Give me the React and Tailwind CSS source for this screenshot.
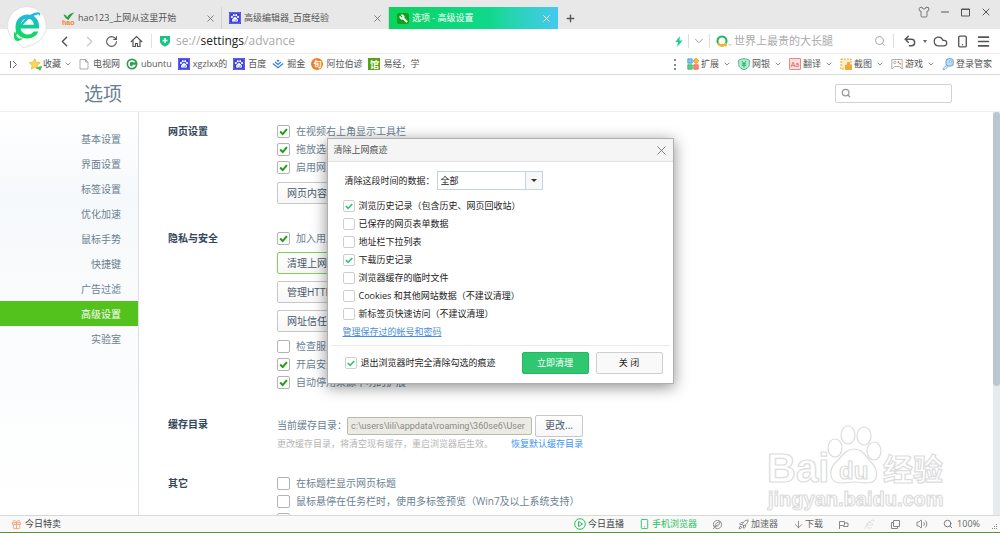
import React from 'react';
import { useState } from 'react';
import {
  ArrowDown, ChevronDown, ChevronLeft, ChevronRight, Cloud, Gift, Menu, Minus,
  Plus, Rocket, RotateCw, Search, Shirt, Smartphone, Undo2, Volume2, Wrench, X,
} from 'lucide-react';

const Paw = ({ className }) => (
  <svg viewBox="0 0 13 13" className={className}>
    <rect width="13" height="13" fill="#2b33dc" />
    <rect x="1" y="1" width="11" height="11" fill="none" stroke="#c9ccff" strokeWidth="0.5" />
    <g fill="#fff">
      <ellipse cx="3.2" cy="5.4" rx="1" ry="1.3" />
      <ellipse cx="5.2" cy="3.4" rx="1" ry="1.3" />
      <ellipse cx="7.8" cy="3.4" rx="1" ry="1.3" />
      <ellipse cx="9.8" cy="5.4" rx="1" ry="1.3" />
      <path d="M6.5 5.3c1.3 0 1.8 1.3 2.7 2.2 1 1 .9 3-.7 3.1-.8 0-1.3-.2-2-.2s-1.2.2-2 .2c-1.6-.1-1.7-2.1-.7-3.1.9-.9 1.4-2.2 2.7-2.2z" />
    </g>
    <path d="M5.300 8v1.300M7.300 8v1.300h.9V8" fill="none" stroke="#2b33dc" strokeWidth="0.5" />
  </svg>
);

const Logo = () => (
  <svg viewBox="0 0 42 44" className="absolute left-[6px] top-[5px] z-10 h-[44px] w-[42px]">
    <defs>
      <linearGradient id="logo" x1="0" y1="0" x2="0" y2="1">
        <stop offset="0" stopColor="#27b5ee" />
        <stop offset="0.45" stopColor="#12c9a0" />
        <stop offset="0.8" stopColor="#12d965" />
      </linearGradient>
    </defs>
    <path d="M21 1.5a19.5 19.5 0 0 1 7 37.600L17 43l-3.5-4A19.5 19.5 0 0 1 21 1.5z" fill="#fff" stroke="#dcdcdc" strokeWidth="0.8" />
    <path
      d="M9.500 22.500C9.500 14.500 15 9.500 21.500 9.500c6.500 0 11.500 4.500 11.500 11.500v2.500H14.500c.8 3.800 3.800 6 7.300 6 2.700 0 4.700-1.100 5.700-3h4.700c-1.300 4.300-5.400 6.900-10.700 6.900-7 0-12-4.200-12-10.900zm5.200-2.700h13.200c-.6-4-3-6.200-6.500-6.200-3.400 0-6 2.200-6.700 6.200z"
      fill="url(#logo)"
    />
    <path d="M9.200 35C6 30 15 15.500 25 9.500c4-2.400 8-3 9-1.500.5.8.3 2-.3 3.300.1-2-1.500-2.300-4.700-1C20.500 13.500 10 27 9.200 35z" fill="url(#logo)" />
    <path d="M8.500 26c-1 4-.5 8.500 1.700 9.800 2.300.6 5.300-1 7.300-2.600-3 .8-5.500.2-7-2.200-.9-1.400-1.600-3-2-5z" fill="#12d965" />
  </svg>
);

const HaoIcon = () => (
  <svg viewBox="0 0 13 13" className="h-[13px] w-[13px] shrink-0">
    <path d="M1.500 2.500c2 0 3 1.200 3.700 2.700C6.500 2.500 9 .8 12.500.5 10 2.500 8.500 5 6.500 8 4.500 7.500 2.500 5.500 1.500 2.500z" fill="#2fa043" />
    <text x="0" y="12.500" fontSize="7" fontWeight="700" fontFamily="Liberation Sans" fill="#f08030">hao</text>
  </svg>
);

const ShieldIcon = () => (
  <svg viewBox="0 0 12 12" className="h-[12px] w-[12px] shrink-0">
    <path d="M1 1h10v5.500C11 9 8.500 10.600 6 11.600 3.500 10.600 1 9 1 6.500z" fill="#16c586" />
    <path d="M6 3v5M3.500 5.500h5" stroke="#fff" strokeWidth="1.500" />
  </svg>
);

const HomeIcon = () => (
  <svg viewBox="0 0 13 13" className="ml-[12px] h-[13px] w-[13px] shrink-0" fill="none" stroke="#555" strokeWidth="1.200">
    <path d="M.8 7L6.500 1.500 12.200 7M3 5.500v6h2.500v-3h2v3H10v-6" />
  </svg>
);

const StarIcon = () => (
  <svg viewBox="0 0 13 13" className="h-[13px] w-[13px] shrink-0">
    <path d="M5.800.8l1.600 3.400 3.800.5-2.800 2.600.7 3.700-3.300-1.800L2.500 11l.6-3.700L.4 4.700l3.800-.5z" fill="#ffd84f" stroke="#f0a830" strokeWidth="0.7" />
    <path d="M7.500 10l5-1.500-1.500 3.700-1.200-1.200z" fill="#47bd58" stroke="#47bd58" />
  </svg>
);

const DocIcon = () => (
  <svg viewBox="0 0 12 12" className="h-[12px] w-[12px] shrink-0" fill="none" stroke="#999" strokeWidth="0.8">
    <path d="M2 1.500h5.500l2.500 2.500v7H2zM7.500 1.500V4H10" />
  </svg>
);

const CIcon = () => (
  <svg viewBox="0 0 12 12" className="h-[12px] w-[12px] shrink-0">
    <circle cx="6" cy="6" r="5.500" fill="#2f9e52" />
    <path d="M8.500 4.500A3 3 0 1 0 8.500 7.500H6.500" fill="none" stroke="#fff" strokeWidth="1.600" />
  </svg>
);

const JuejinIcon = () => (
  <svg viewBox="0 0 12 12" className="h-[12px] w-[12px] shrink-0" fill="none" stroke="#2f80e8" strokeWidth="1.200">
    <path d="M6 1.500L7.500 2.800 6 4 4.500 2.800z" fill="#2f80e8" stroke="none" />
    <path d="M3 4l3 2.400L9 4M.8 5.500L6 9.800l5.200-4.300" />
  </svg>
);

const OrangeIcon = () => (
  <span className="flex h-[12px] w-[12px] items-center justify-center rounded-full bg-[#ee8222] text-[8px] leading-none font-bold text-white">旬</span>
);

const GuanIcon = () => (
  <span className="flex h-[12px] w-[12px] items-center justify-center bg-[#59a20d] text-[9px] leading-none font-bold text-white">馆</span>
);

const ExtIcon = () => (
  <svg viewBox="0 0 12 12" className="h-[12px] w-[12px] shrink-0" strokeWidth="0.8">
    <path d="M.8.8h4.400v4.400H.8z" fill="#7cc8f5" stroke="#3ba0e0" />
    <path d="M9 0l2.800 2.900L9 5.800 6.200 2.900z" fill="#ffb53c" stroke="#ef8b1e" />
    <path d="M.8 6.800h4.400v4.400H.8z" fill="#5ed281" stroke="#28b055" />
    <path d="M6.800 6.800h4.400v4.400H6.800z" fill="#f78b80" stroke="#ea5648" />
  </svg>
);

const BankIcon = () => (
  <svg viewBox="0 0 12 12" className="h-[12px] w-[12px] shrink-0">
    <path d="M6 .5L11.300 2v4.500C11.300 9 8.500 11 6 11.600 3.500 11 .7 9 .7 6.500V2z" fill="#b6ecd0" stroke="#3bb879" strokeWidth="0.9" />
    <path d="M4 3l2 2.500L8 3M3.800 5.800h4.400M3.800 7.300h4.400M6 5.500V9.500" fill="none" stroke="#2aa367" strokeWidth="0.9" />
  </svg>
);

const TranslateIcon = () => (
  <span className="flex h-[12px] w-[12px] shrink-0 items-center justify-center rounded-[1px] border border-[#e58a88] bg-[#fbdedd] text-[7px] leading-none text-[#d9534f]">Aa</span>
);

const CutIcon = () => (
  <svg viewBox="0 0 12 12" className="h-[12px] w-[12px] shrink-0">
    <path d="M1 1h10v10H1z" fill="#ffefc2" stroke="#f0a52c" strokeDasharray="2 1" />
    <path d="M5 7h7v5H5zM6.500 7l1-3h2l1 3z" fill="#f2a93b" />
  </svg>
);

const GameIcon = () => (
  <svg viewBox="0 0 12 12" className="h-[12px] w-[12px] shrink-0" fill="none" stroke="#9a9a9a" strokeWidth="0.8">
    <path d="M.8 1.500h10.400v9.500l-2.700-2.500h-5L.8 11z" />
    <circle cx="3.800" cy="4.500" r="1.200" />
    <path d="M6.800 3.500l1.200 1.200M8.500 5.200l1.200 1.200" stroke="#e05050" strokeWidth="1.300" />
  </svg>
);

const KeyIcon = () => (
  <svg viewBox="0 0 12 12" className="h-[12px] w-[12px] shrink-0">
    <path d="M1 10.500L5 6.500l1.500 1.500-3.500 3.500H1z" fill="#d5eafb" stroke="#6aa3d8" strokeWidth="0.8" />
    <rect x="4" y="0.7" width="7.300" height="7.300" rx="2.500" fill="#b5dcf8" stroke="#5b9bd5" strokeWidth="0.9" />
    <circle cx="8.500" cy="3.500" r="1" fill="#fff" stroke="#5b9bd5" strokeWidth="0.5" />
  </svg>
);

const leftMarks = [
  { label: '电视网', icon: <DocIcon /> },
  { label: 'ubuntu', icon: <CIcon /> },
  { label: 'xgzlxx的', icon: <Paw className="h-[12px] w-[12px]" /> },
  { label: '百度', icon: <Paw className="h-[12px] w-[12px]" /> },
  { label: '掘金', icon: <JuejinIcon /> },
  { label: '阿拉伯谚', icon: <OrangeIcon /> },
  { label: '易经，学', icon: <GuanIcon /> },
];

const rightMarks = [
  { label: '扩展', icon: <ExtIcon /> },
  { label: '网银', icon: <BankIcon /> },
  { label: '翻译', icon: <TranslateIcon /> },
  { label: '截图', icon: <CutIcon /> },
  { label: '游戏', icon: <GameIcon /> },
];

const menu = ['基本设置', '界面设置', '标签设置', '优化加速', '鼠标手势', '快捷键', '广告过滤', '高级设置', '实验室'];

const clearItems = [
  ['浏览历史记录（包含历史、网页回收站）', true],
  ['已保存的网页表单数据', false],
  ['地址栏下拉列表', false],
  ['下载历史记录', true],
  ['浏览器缓存的临时文件', false],
  ['Cookies 和其他网站数据（不建议清理）', false],
  ['新标签页快速访问（不建议清理）', false],
];

const Option = ({ label, checked = false }) => (
  <label className="flex h-[18px] items-center gap-[6px] whitespace-nowrap text-[#6b7f93]">
    <span className="relative flex h-[13px] w-[13px]">
      <input type="checkbox" defaultChecked={checked} className="peer h-[13px] w-[13px] appearance-none rounded-[2px] border border-[#b4b4b4] bg-white" />
      <svg viewBox="0 0 13 13" className="pointer-events-none absolute inset-0 hidden peer-checked:block">
        <path d="M3.200 6.500l2.500 2.600 4.200-5" fill="none" stroke="#1f9d12" strokeWidth="2" />
      </svg>
    </span>
    {label}
  </label>
);

const ClearOption = ({ label, checked }) => (
  <label className="flex h-[18px] items-center gap-1 whitespace-nowrap">
    <span className="relative flex h-[12px] w-[12px]">
      <input type="checkbox" defaultChecked={checked} className="peer h-[12px] w-[12px] appearance-none rounded-[2px] border border-[#cfcfcf] bg-white" />
      <svg viewBox="0 0 12 12" className="pointer-events-none absolute inset-0 hidden peer-checked:block">
        <path d="M2.800 6l2.300 2.300L9.300 4" fill="none" stroke="#2fc56f" strokeWidth="1.600" />
      </svg>
    </span>
    {label}
  </label>
);

const PageButton = ({ children, active }) => (
  <button
    type="button"
    className={`block h-[22px] rounded-[2px] border bg-linear-to-b from-white to-[#f7f7f7] px-[9px] whitespace-nowrap text-[#46566a] ${active ? 'border-[#7fd455]' : 'border-[#c8c8c8]'}`}
  >
    {children}
  </button>
);

const Section = ({ title, className = '', children }) => (
  <section className={`flex ${className}`}>
    <h2 className="w-[109px] shrink-0 leading-[18px] font-bold text-[#33475b]">{title}</h2>
    <div className="min-w-0">{children}</div>
  </section>
);

const Tab = ({ icon, children }) => (
  <div className="flex h-[22px] w-[167px] items-center border-r border-[#d2d2d2] pr-[5px] pl-[7px]">
    {icon}
    <span className="ml-[3px] flex-1 truncate">{children}</span>
    <button type="button" aria-label="关闭标签"><X className="h-[11px] w-[11px] text-[#777]" strokeWidth={2} /></button>
  </div>
);

const TabBar = () => (
  <header className="flex h-[29px] shrink-0 items-end justify-between bg-[#e8e8e8] text-[9px] text-[#555]">
    <div className="flex h-[22px] items-center pl-[55px]">
      <Tab icon={<HaoIcon />}>hao123_上网从这里开始</Tab>
      <Tab icon={<Paw className="h-[12px] w-[12px]" />}>高级编辑器_百度经验</Tab>
      <div className="flex h-[22px] w-[169px] items-center bg-linear-to-r from-[#0bd35e] via-[#10d98c] via-60% to-[#45c8f0] pr-[6px] pl-[8px] text-white">
        <span className="flex h-[11px] w-[12px] items-center justify-center rounded-[2px] bg-[#15a01a]">
          <Wrench className="h-[9px] w-[9px] -scale-x-100" fill="white" />
        </span>
        <span className="ml-[3px] flex-1">选项 - 高级设置</span>
        <button type="button" aria-label="关闭标签"><X className="h-[11px] w-[11px]" /></button>
      </div>
      <button type="button" aria-label="新标签" className="ml-[7px]"><Plus className="h-[11px] w-[11px]" strokeWidth={3} /></button>
    </div>
    <div className="flex items-center gap-[9px] self-start pt-[6px] pr-[8px] text-[#555]">
      <Shirt className="h-[12px] w-[12px]" strokeWidth={1.5} />
      <Minus className="h-[12px] w-[12px]" />
      <svg viewBox="0 0 11 11" className="h-[11px] w-[11px]" fill="none" stroke="#555"><path d="M1.500 2h8v7h-8zM1.500 2.500h8" /></svg>
      <X className="h-[12px] w-[12px]" />
    </div>
  </header>
);

const AddressBar = () => (
  <div className="flex h-[25px] shrink-0 items-center border-b border-[#ececec] bg-white pr-[9px] pl-[56px] text-[#555]">
    <ChevronLeft className="h-[17px] w-[17px]" />
    <ChevronRight className="ml-[8px] h-[17px] w-[17px] text-[#ccc]" />
    <RotateCw className="ml-[7px] h-[13px] w-[13px]" />
    <HomeIcon />
    <span className="mr-[7px] ml-[8px] h-[14px] w-px bg-[#e0e0e0]" />
    <ShieldIcon />
    <div className="ml-[5px] flex-1 text-[12px] text-[#aaa]">se://<span className="text-[#222]">settings</span>/advance</div>
    <svg viewBox="0 0 8 12" className="h-[11px] w-[8px]"><path d="M5 0L0 6.500h3L2 12l6-7H4.500z" fill="#1bcf91" /></svg>
    <span className="mr-[3px] ml-[5px] h-[14px] w-px bg-[#ddd]" />
    <ChevronDown className="h-[14px] w-[14px] text-[#999]" strokeWidth={1.5} />
    <span className="mx-[3px] h-[14px] w-px bg-[#ddd]" />
    <svg viewBox="0 0 16 12" className="ml-[3px] h-[12px] w-[16px]" fill="none">
      <circle cx="6" cy="6" r="4.500" stroke="#19b955" strokeWidth="2" />
      <path d="M2 8A4.500 4.500 0 0 0 10 8M8.500 9l2 2" stroke="#fbb320" strokeWidth="2" />
      <path d="M12.500 9l1.500 1.500L15.500 9" stroke="#aaa" strokeWidth="0.8" />
    </svg>
    <input aria-label="搜索" placeholder="世界上最贵的大长腿" className="ml-[2px] w-[140px] bg-transparent text-[11px] placeholder:text-[#aaa]" />
    <Search className="h-[12px] w-[12px] text-[#aaa]" />
    <span className="mr-[9px] ml-[7px] h-[14px] w-px bg-[#ddd]" />
    <Undo2 className="h-[14px] w-[14px]" strokeWidth={2.5} />
    <span className="mx-[6px] border-x-2 border-t-3 border-x-transparent border-t-[#666]" />
    <Cloud className="h-[15px] w-[15px]" />
    <Smartphone className="ml-[8px] h-[13px] w-[13px]" strokeWidth={2.5} />
    <Menu className="ml-[7px] h-[15px] w-[15px]" strokeWidth={2.5} />
  </div>
);

const BookmarkBar = () => (
  <nav className="flex h-[21px] shrink-0 items-center justify-between border-b border-[#ddd] bg-white pr-[8px] pl-[9px] text-[9px] whitespace-nowrap text-[#555]">
    <div className="flex items-center">
      <svg viewBox="0 0 9 9" className="h-[9px] w-[9px]" fill="none" stroke="#666" strokeWidth="1"><path d="M1.500 1v7M4 1l3.500 3.500L4 8" /></svg>
      <a href="#fav" className="ml-[11px] flex items-center gap-px"><StarIcon />收藏<ChevronDown className="ml-[2px] h-[8px] w-[8px]" /></a>
      <div className="ml-[6px] flex items-center gap-[6px]">
        {leftMarks.map((m) => (
          <a key={m.label} href="#mark" className="flex items-center gap-[3px]">{m.icon}{m.label}</a>
        ))}
      </div>
    </div>
    <div className="flex items-center gap-[7px]">
      <span className="mr-[4px] h-[11px] border-l-2 border-dotted border-[#888]" />
      {rightMarks.map((m) => (
        <a key={m.label} href="#tool" className="flex items-center gap-[2px]">{m.icon}{m.label}<ChevronDown className="ml-[2px] h-[8px] w-[8px] shrink-0" /></a>
      ))}
      <a href="#login" className="flex items-center gap-[2px]"><KeyIcon />登录管家</a>
    </div>
  </nav>
);

const Sidebar = () => (
  <nav className="w-[139px] shrink-0 border-r border-[#dde2e6] bg-linear-to-b from-white via-[#f6f9fb] via-20% to-white pt-[14px] text-right text-[#6b7f93]">
    {menu.map((name) => (
      <a
        key={name}
        href="#menu"
        className={`block h-[25px] pr-[17px] leading-[26px] ${name === '高级设置' ? 'bg-[#54c21c] text-white' : ''}`}
      >
        {name}
      </a>
    ))}
  </nav>
);

const Settings = () => (
  <div className="min-w-0 flex-1 pt-[10px] pl-[29px]">
    <Section title="网页设置">
      <Option label="在视频右上角显示工具栏" checked />
      <Option label="拖放选中" checked />
      <Option label="启用网页" checked />
      <div className="mt-[6px]"><PageButton>网页内容高级设置</PageButton></div>
    </Section>
    <Section title="隐私与安全" className="mt-[25px]">
      <Option label="加入用户" checked />
      <div className="mt-[5px] mb-[5px] flex flex-col items-start gap-[7px]">
        <PageButton active>清理上网痕迹</PageButton>
        <PageButton>管理HTTPS证书</PageButton>
        <PageButton>网址信任与阻止</PageButton>
      </div>
      <Option label="检查服务" />
      <Option label="开启安全" checked />
      <Option label="自动停用来源不明的扩展" checked />
    </Section>
    <Section title="缓存目录" className="mt-[24px]">
      <div className="flex h-[21px] items-center text-[#6b7f93]">
        <label htmlFor="cache">当前缓存目录：</label>
        <input
          id="cache"
          disabled
          defaultValue="c:\users\lili\appdata\roaming\360se6\User"
          className="h-[18px] w-[185px] rounded-[2px] border border-[#b9b9b0] bg-[#ebebe4] px-[3px] font-['Roboto'] text-[9px] text-[#8a8a85]"
        />
        <span className="ml-[3px]"><PageButton>更改...</PageButton></span>
      </div>
      <p className="text-[9px] leading-[15px] text-[#b5b5b5]">
        更改缓存目录，将清空现有缓存，重启浏览器后生效。
        <a href="#reset" className="ml-[18px] text-[#3d94f6]">恢复默认缓存目录</a>
      </p>
    </Section>
    <Section title="其它" className="mt-[23px]">
      <Option label="在标题栏显示网页标题" />
      <Option label="鼠标悬停在任务栏时，使用多标签预览（Win7及以上系统支持）" />
      <Option label="" />
    </Section>
  </div>
);

const Watermark = () => (
  <svg viewBox="0 0 184 92" className="pointer-events-none absolute right-[50px] bottom-0 h-[92px] w-[184px]" fill="#fff" stroke="#dcdcdc" strokeWidth="1.200" fontFamily="Liberation Sans, Noto Sans CJK SC, sans-serif" fontWeight="700">
    <text x="1" y="59" fontSize="40">Bai</text>
    <ellipse cx="69" cy="25" rx="7" ry="9" />
    <ellipse cx="82" cy="12" rx="7" ry="9" />
    <ellipse cx="98" cy="13" rx="7" ry="9" />
    <ellipse cx="108" cy="28" rx="7" ry="9" />
    <path d="M88 26c9 0 12 8 17 13 8 8 8 21-4 21-5 0-8-1-13-1s-8 1-13 1c-12 0-13-13-5-21 6-5 9-13 18-13z" />
    <text x="73" y="56" fontSize="24">du</text>
    <text x="117" y="57" fontSize="30">经验</text>
    <text x="2" y="83" fontSize="20">jingyan.baidu.com</text>
  </svg>
);

const ClearDialog = ({ onClose }) => (
  <div className="pointer-events-none absolute inset-0 z-20 flex items-start justify-center pt-[138px]">
    <div role="dialog" aria-label="清除上网痕迹" className="pointer-events-auto w-[347px] border border-[#b0b0b0] bg-white text-[9px] text-[#222] shadow-[0_3px_14px_rgba(0,0,0,0.45)]">
      <div className="flex h-[23px] items-center justify-between border-b border-[#e2e2e2] bg-[#f5f5f5] pr-[4px] pl-[6px] text-[#555]">
        清除上网痕迹
        <button type="button" aria-label="关闭" onClick={onClose}><X className="h-[15px] w-[15px] text-[#777]" strokeWidth={1.5} /></button>
      </div>
      <div className="px-[15px] pt-[9px] pb-[4px]">
        <div className="mb-[7px] flex items-center pl-[2px]">
          <label htmlFor="range" className="w-[92px]">清除这段时间的数据：</label>
          <span className="relative">
            <select id="range" className="h-[19px] w-[106px] appearance-none border border-[#c3d3e2] bg-white px-[3px] text-[9px]">
              <option>全部</option>
            </select>
            <span className="pointer-events-none absolute top-px right-px flex h-[17px] w-[17px] items-center justify-center border-l border-[#c3d3e2] bg-[#f8f8f8]">
              <span className="border-x-3 border-t-3 border-x-transparent border-t-[#333]" />
            </span>
          </span>
        </div>
        {clearItems.map(([label, checked]) => (
          <ClearOption key={label} label={label} checked={checked} />
        ))}
        <a href="#accounts" className="block leading-[18px] text-[#4a8ee0] underline">管理保存过的帐号和密码</a>
      </div>
      <div className="mx-[3px] flex items-center justify-between border-t border-[#ebebeb] pt-[6px] pr-[7px] pb-[9px] pl-[14px]">
        <ClearOption label="退出浏览器时完全清除勾选的痕迹" checked />
        <div className="flex gap-[7px]">
          <button type="button" className="h-[22px] w-[67px] rounded-[2px] border border-[#25b662] bg-[#2fc76f] text-white">立即清理</button>
          <button type="button" onClick={onClose} className="h-[22px] w-[67px] rounded-[2px] border border-[#cfcfcf] bg-[#f9f9f9]">关 闭</button>
        </div>
      </div>
    </div>
  </div>
);

const StatusBar = () => (
  <footer className="flex h-[18px] shrink-0 items-center justify-between border-t border-b border-t-[#d8d8d8] border-b-[#5f8a48] bg-[#f9f9f9] pr-px pl-[11px] text-[9px] text-[#444]">
    <a href="#sale" className="flex items-center gap-[3px]"><Gift className="h-[11px] w-[11px] text-[#f5a37c]" />今日特卖</a>
    <div className="flex items-center gap-[15px] text-[#666]">
      <a href="#live" className="flex items-center gap-[2px]">
        <svg viewBox="0 0 12 12" className="h-[12px] w-[12px]" fill="none" stroke="#27c060"><circle cx="6" cy="6" r="5.300" /><path d="M4.500 3.500L8.500 6l-4 2.500z" /></svg>
        <span className="text-[#444]">今日直播</span>
      </a>
      <a href="#phone" className="flex items-center gap-[2px] text-[#27c060]"><Smartphone className="h-[12px] w-[11px]" />手机浏览器</a>
      <svg viewBox="0 0 12 12" className="h-[11px] w-[11px]" fill="none" stroke="#888"><circle cx="6" cy="6" r="4.500" /><path d="M3 9c0-4 3-6 6-6-1 4-3 5-6 6zM1 11l5-5" /></svg>
      <a href="#boost" className="flex items-center gap-[2px]"><Rocket className="h-[11px] w-[11px]" strokeWidth={1.5} />加速器</a>
      <a href="#down" className="flex items-center gap-[1px]"><ArrowDown className="h-[11px] w-[11px]" strokeWidth={1.5} />下载</a>
      <svg viewBox="0 0 11 11" className="h-[11px] w-[11px]" fill="none" stroke="#888"><path d="M1.500 10V2.500h5V4h3.500v3.500H5.500V6.500h-4M6.500 4v2.500" /></svg>
      <svg viewBox="0 0 12 12" className="h-[11px] w-[11px]" fill="none" stroke="#ddd"><path d="M3 6.500h6.500a3.300 3.300 0 1 0-1 2.500M1.500 11C0 9 5 2 10.500 1c1 0 .5 1.500 0 2" /></svg>
      <svg viewBox="0 0 11 11" className="h-[11px] w-[11px]" fill="none" stroke="#888"><path d="M3.500 1.500h6v6h-6zM3.500 3.500h-2v6h6v-2" /></svg>
      <Volume2 className="h-[12px] w-[12px]" strokeWidth={1.5} />
      <span className="flex items-center gap-[4px]"><Search className="h-[10px] w-[10px]" />100%</span>
      <svg viewBox="0 0 8 8" className="-ml-[4px] h-[8px] w-[8px] self-end" fill="#888"><path d="M5 1h1v1H5zM3 3h1v1H3zM5 3h1v1H5zM1 5h1v1H1zM3 5h1v1H3zM5 5h1v1H5z" /></svg>
    </div>
  </footer>
);

const App = () => {
  const [open, setOpen] = useState(true);

  return (
    <div className="relative flex h-screen flex-col overflow-hidden bg-white font-['Open_Sans','Noto_Sans_CJK_SC',sans-serif] text-[10px]">
      <Logo />
      <TabBar />
      <AddressBar />
      <BookmarkBar />
      <div className="flex h-[37px] shrink-0 items-center justify-between border-b border-[#eeeeee] pr-[48px] pl-[84px]">
        <h1 className="pt-[3px] text-[19px] text-[#6b7f93]">选项</h1>
        <div className="flex h-[19px] w-[117px] items-center rounded-[2px] border border-[#d2d2d2] px-[5px]">
          <Search className="h-[10px] w-[10px] shrink-0 text-[#999]" strokeWidth={3} />
          <input aria-label="搜索设置" className="ml-1 w-full" />
        </div>
      </div>
      <main className="relative flex min-h-0 flex-1 overflow-hidden">
        <Sidebar />
        <Settings />
        <Watermark />
        <div className="w-[7px] shrink-0 bg-[#e5ebef]">
          <div className="h-[68%] rounded-full bg-[#b9c7d3]" />
        </div>
      </main>
      <StatusBar />
      {open && <ClearDialog onClose={() => setOpen(false)} />}
    </div>
  );
};

export default App;
